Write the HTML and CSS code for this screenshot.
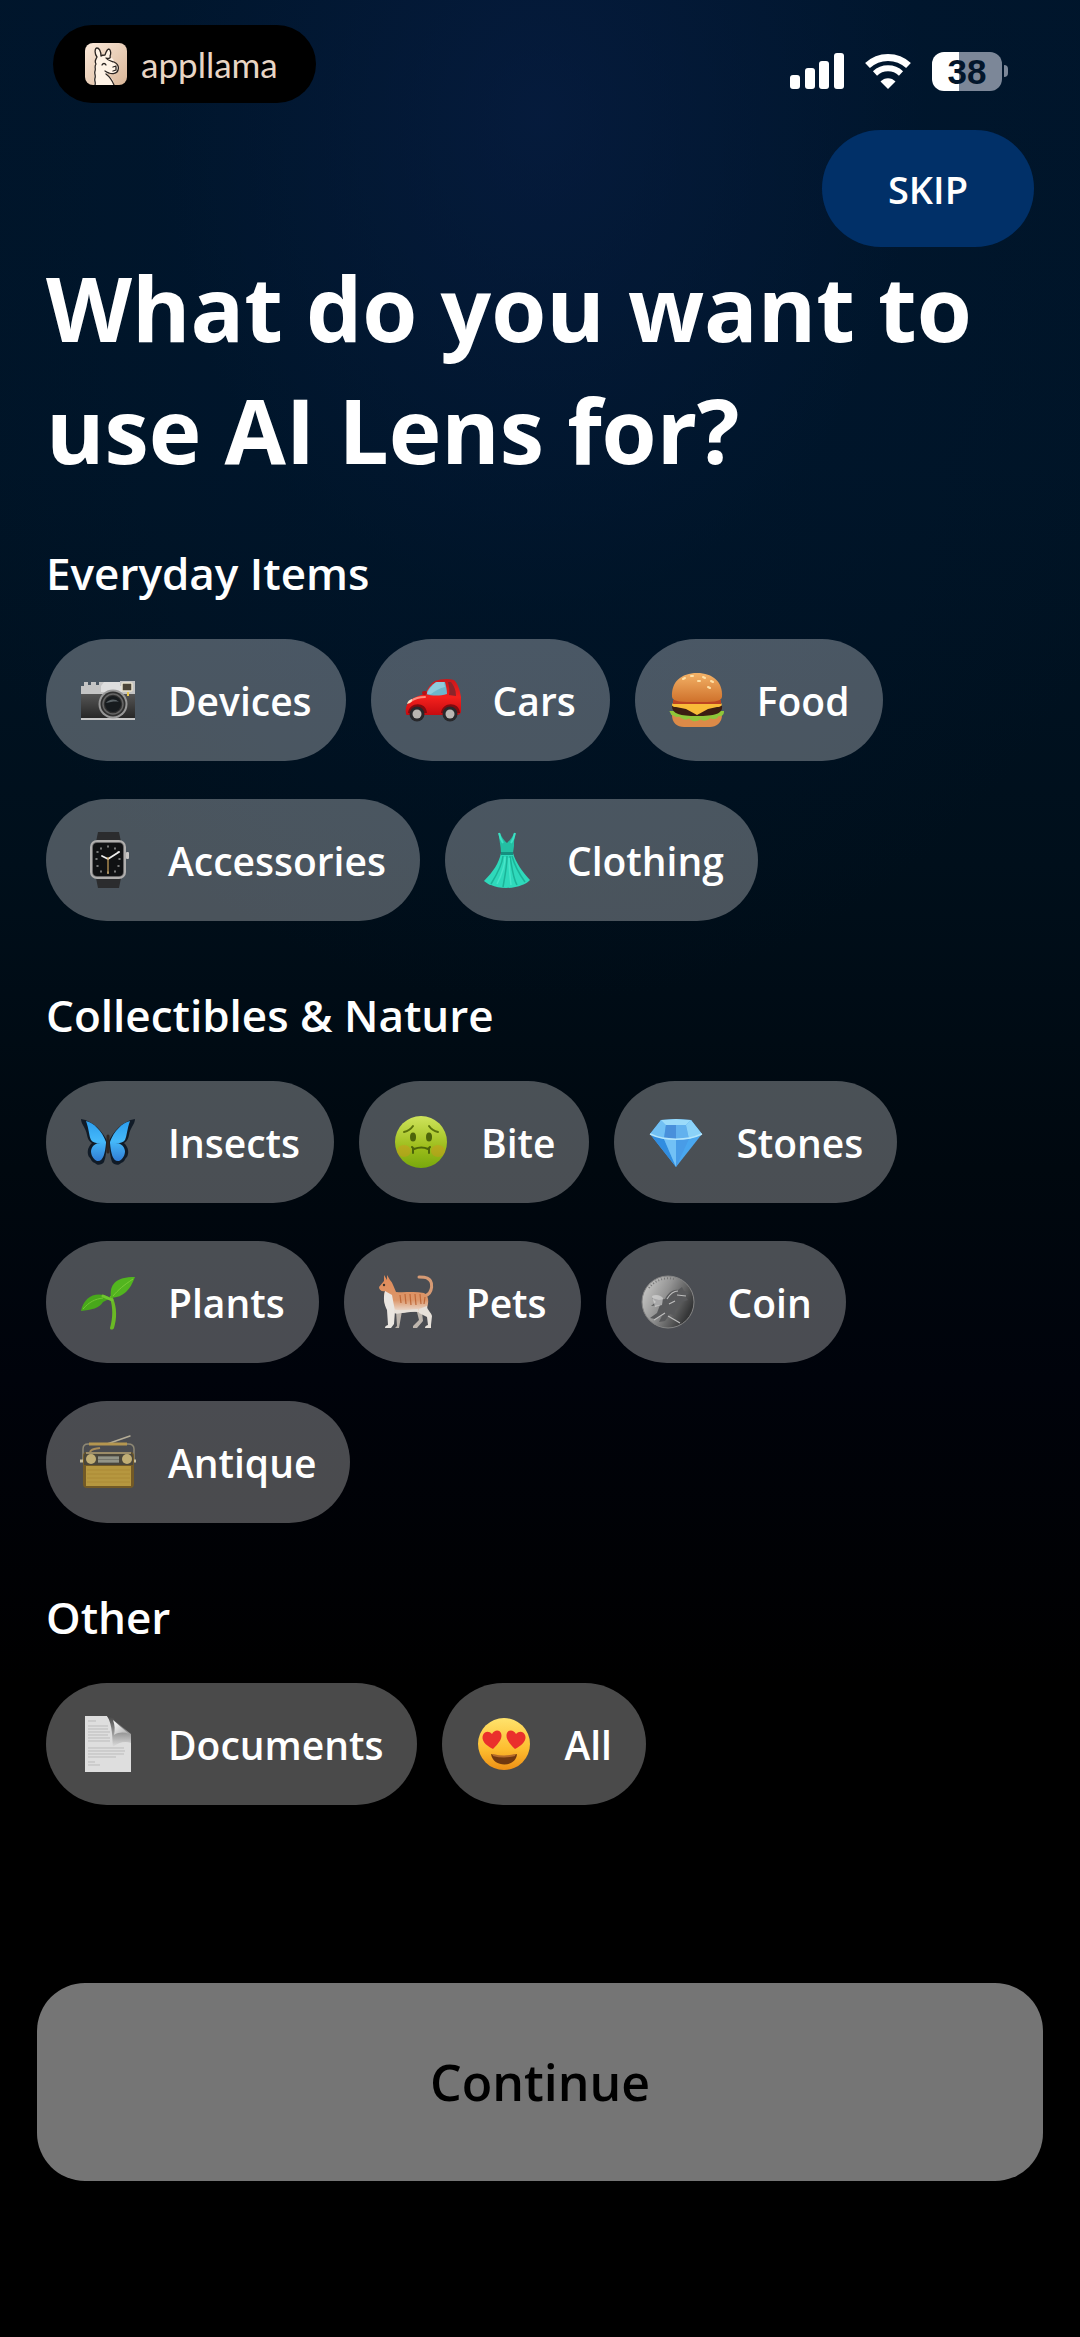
FILE: index.html
```html
<!DOCTYPE html>
<html lang="en">
<head>
    <meta charset="UTF-8">
    <meta name="viewport" content="width=device-width, initial-scale=1.0">
    <title>AI Lens</title>
    <link rel="stylesheet" href="styles.css">
</head>
<body>
    <div class="screen">
        <header class="status-bar">
            <div class="brand">
                <svg class="brand-icon" viewBox="0 0 42 42" aria-hidden="true">
                    <defs>
                        <linearGradient id="brandBg" x1="0" y1="0" x2="1" y2="1">
                            <stop offset="0" stop-color="#fbe9da"/>
                            <stop offset="1" stop-color="#d9b698"/>
                        </linearGradient>
                    </defs>
                    <rect width="42" height="42" rx="8" fill="url(#brandBg)"/>
                    <path d="M9 42c1-3-1-4 0-7s-1-4 0-7 0-4 1-6c-1-4 1-6 2-8-3-4-2-9 0-9s4 3 4 8c1-1 3-1 4-1 1-3 3-6 4-6 2 1 2 5 1 8 3 1 4 3 4 6 3 2 5 4 4 7-1 4-5 4-9 3l-2 1c4 3 7 6 7 11z" fill="#fff3e6"/>
                    <path d="M10 42c1-3-1-4 0-7s-1-4 0-7-1-4 1-7c-2-3 0-5 1-7-3-4-2-9 0-9s4 3 4 8c1-1 3-1 4-1 1-3 3-6 4-6 2 1 2 5 1 7 1 2-1 3-4 2 2 3 6 3 8 4 4 2 5 5 4 8-1 4-6 4-9 3-2 0-2-1-4-2M17 22c1-2 3-2 4 0M28 24l3-1M31 24v3M28 28l3-1M21 31c4 3 6 6 8 11" fill="none" stroke="#2b2522" stroke-width="1.3" stroke-linecap="round" stroke-linejoin="round"/>
                </svg>
                <span class="brand-name">appllama</span>
            </div>
            <div class="status-icons">
                <svg class="signal" viewBox="0 0 54 36" aria-label="Signal">
                    <g fill="#fff">
                        <rect x="0" y="22" width="10" height="14" rx="3"/>
                        <rect x="15" y="15" width="10" height="21" rx="3"/>
                        <rect x="29" y="8" width="10" height="28" rx="3"/>
                        <rect x="44" y="0" width="10" height="36" rx="3"/>
                    </g>
                </svg>
                <svg class="wifi" viewBox="0 0 48 36" aria-label="Wi-Fi">
                    <path d="M3.5 12.5a30 30 0 0 1 41 0" fill="none" stroke="#fff" stroke-width="7"/>
                    <path d="M11 20.5a19 19 0 0 1 26 0" fill="none" stroke="#fff" stroke-width="6"/>
                    <path d="M24 36l-7.5-7.5c4-4.5 11-4.5 15 0z" fill="#fff"/>
                </svg>
                <div class="battery"><span class="battery-level">38</span></div>
            </div>
        </header>

        <div class="top-actions">
            <button type="button" class="skip">SKIP</button>
        </div>

        <main class="content">
            <h1>What do you want to use AI Lens for?</h1>

            <section>
                <h2>Everyday Items</h2>
                <div class="chips">
                    <button type="button" class="chip">
                        <svg class="emoji" viewBox="0 0 56 56" aria-hidden="true">
                            <defs>
                                <linearGradient id="camBody" x1="0" y1="0" x2="0" y2="1">
                                    <stop offset="0" stop-color="#555"/>
                                    <stop offset="1" stop-color="#252525"/>
                                </linearGradient>
                            </defs>
                            <path d="M4 10h4v3h3v-3h5v3h3v-3h5l2 4h29v12H1V14h3z" fill="#c4c4c4"/>
                            <path d="M21 14l3-4h16l2 4v6H21z" fill="#dedede"/>
                            <path d="M40 9h15v5H40z" fill="#c4c4c4"/>
                            <rect x="42" y="11" width="10" height="8" rx="1" fill="#4b4437" stroke="#e6e0cc" stroke-width="1.5"/>
                            <rect x="1" y="22" width="54" height="25" fill="url(#camBody)"/>
                            <rect x="1" y="46" width="54" height="2" fill="#c9c9c9"/>
                            <circle cx="33" cy="32" r="14.500" fill="#989898"/>
                            <circle cx="33" cy="32" r="12.500" fill="#303030"/>
                            <circle cx="33" cy="32" r="10" fill="none" stroke="#666" stroke-width="1.5"/>
                            <circle cx="33" cy="32" r="8" fill="#171b1e"/>
                            <path d="M26 31c3-4 9-5 13-1-4-1-8 0-13 1z" fill="#5b6367"/>
                            <path d="M48 20v4" stroke="#e9c64f" stroke-width="2"/>
                        </svg>
                        Devices
                    </button>
                    <button type="button" class="chip">
                        <svg class="emoji" viewBox="0 0 56 56" aria-hidden="true">
                            <defs>
                                <linearGradient id="carBody" x1="0" y1="0" x2="0" y2="1">
                                    <stop offset="0" stop-color="#c8181b"/>
                                    <stop offset=".5" stop-color="#f5211d"/>
                                    <stop offset="1" stop-color="#c50b10"/>
                                </linearGradient>
                            </defs>
                            <path d="M1 42c-1-5 0-9 3-12 3-4 9-6 16-8 3-6 6-11 10-13 5-2 13-3 19-1 4 4 6 10 7 17v14c0 2-1 3-3 4H4c-2 0-3 0-3-1z" fill="url(#carBody)"/>
                            <path d="M21 22c2-5 5-9 10-12h9c1 4 2 8 2 12-7 2-15 2-21 0z" fill="#6eb7cc"/>
                            <path d="M27 14c1-2 3-3 5-4h7l1 5c-5 1-10 4-14 7h-4c1-3 3-6 5-8z" fill="#b2e0e9" opacity=".5"/>
                            <path d="M43 10h3c3 4 5 8 5 14l-7-1c1-4 0-9-1-13z" fill="#8b252a"/>
                            <path d="M6 29c4-3 8-4 14-4" stroke="#ff8b7b" stroke-width="2" fill="none" stroke-linecap="round"/>
                            <path d="M2 32c1-3 2-4 5-5 0 3-1 4-5 5z" fill="#f7e3c6"/>
                            <path d="M3 41c1-11 18-12 19 0zM36 41c1-11 18-12 19 0z" fill="#7e0c10"/>
                            <circle cx="12" cy="42" r="7.500" fill="#27282b"/>
                            <circle cx="12" cy="42" r="4.500" fill="#b9b6b2"/>
                            <circle cx="45" cy="42" r="7.500" fill="#27282b"/>
                            <circle cx="45" cy="42" r="4.500" fill="#b9b6b2"/>
                            <rect x="17" y="19" width="5" height="4" rx="2" fill="#ba1016"/>
                        </svg>
                        Cars
                    </button>
                    <button type="button" class="chip">
                        <svg class="emoji" viewBox="0 0 56 56" aria-hidden="true">
                            <defs>
                                <linearGradient id="bun" x1="0" y1="0" x2="0" y2="1">
                                    <stop offset="0" stop-color="#f3b267"/>
                                    <stop offset="1" stop-color="#cf712b"/>
                                </linearGradient>
                            </defs>
                            <path d="M3 43h50c0 8-6 12-12 12H15C8 55 3 51 3 43z" fill="#dc8a48"/>
                            <path d="M3 42c3 0 4 4 7 1 4 4 7 5 10 2 4 4 8 4 11 1 4 3 7 2 10-1 4 2 7 1 8-2 3 1 5-1 5-3H2z" fill="#8fc63a" stroke="#8fc63a" stroke-width="2"/>
                            <path d="M3 34c12-4 38-4 50 0 1 8-8 10-25 10S3 42 3 34z" fill="#3c1e12"/>
                            <path d="M4 31h48c2 2 0 4-4 4l-9 2-11 6-11-6-10-2c-4 0-5-2-3-4z" fill="#f9bc38"/>
                            <path d="M4 28h48v4H4z" fill="#bc4522"/>
                            <path d="M3 25C2 10 12 1 28 1s26 9 25 24c-1 5-10 5-25 5S4 30 3 25z" fill="url(#bun)"/>
                            <path d="M14 7l2-1M22 4h2M34 5l2 1M42 9l2 1M29 9h2M39 15l2 1" stroke="#ffe0a5" stroke-width="2" stroke-linecap="round"/>
                        </svg>
                        Food
                    </button>
                    <button type="button" class="chip">
                        <svg class="emoji" viewBox="0 0 56 56" aria-hidden="true">
                            <path d="M16 10l2-10h21l2 10zM16 46l2 10h21l2-10z" fill="#2b2c2e"/>
                            <rect x="10" y="8" width="36" height="39" rx="7" fill="#b0aead"/>
                            <rect x="12" y="10" width="32" height="35" rx="5" fill="#6a696a"/>
                            <rect x="13" y="11" width="30" height="33" rx="4" fill="#101113"/>
                            <rect x="46" y="20" width="3" height="7" rx="1" fill="#c8c6c4"/>
                            <path d="M28 14v1M28 40v1M16 27h1M39 27h1M21 16v1M35 16v1M17 20h1M38 20h1M17 34h1M38 34h1M21 39v1M35 39v1" stroke="#999" stroke-width="1.5" stroke-linecap="round"/>
                            <path d="M28 27l-6-3M28 27l11-7" stroke="#eee" stroke-width="1.800" stroke-linecap="round"/>
                            <path d="M28 25v17" stroke="#cda45c" stroke-width="1.200"/>
                        </svg>
                        Accessories
                    </button>
                    <button type="button" class="chip">
                        <svg class="emoji" viewBox="0 0 56 56" aria-hidden="true">
                            <path d="M21 1c2 5 4 7 7 10 3-3 5-5 7-10l1 1c-1 5-1 9-1 12l-1 7H22c0-7-2-12-2-19z" fill="#24bfa3"/>
                            <path d="M22 21h12c3 10 9 18 17 27-3 3-5 4-8 5-9 4-23 4-31 0-2 0-4-2-7-4 9-9 15-18 17-28z" fill="#2fd9bb"/>
                            <path d="M24 24c-1 10-7 20-12 28M28 24c0 10-2 20-4 31M31 24c2 12 3 22 7 29M33 24c3 11 8 19 13 26" stroke="#1cb398" stroke-width="1.5" fill="none"/>
                            <path d="M26 25c0 10-4 19-8 27M30 26c0 10 1 18 2 27" stroke="#48e5c9" stroke-width="1.5" fill="none"/>
                            <path d="M22 20h12v3H22z" fill="#158f80"/>
                            <path d="M20 1c1 5 2 7 4 10M36 1c-1 5-2 7-4 10" stroke="#3ce0c3" stroke-width="2" fill="none"/>
                        </svg>
                        Clothing
                    </button>
                </div>
            </section>

            <section>
                <h2>Collectibles &amp; Nature</h2>
                <div class="chips">
                    <button type="button" class="chip">
                        <svg class="emoji" viewBox="0 0 56 56" aria-hidden="true">
                            <defs>
                                <linearGradient id="wing" x1="0" y1="0" x2="0" y2="1">
                                    <stop offset="0" stop-color="#2c9eee"/>
                                    <stop offset=".5" stop-color="#45b9fa"/>
                                    <stop offset="1" stop-color="#317dd5"/>
                                </linearGradient>
                            </defs>
                            <path d="M28 29C23 17 13 7 1 5c0 5 5 9 6 16 1 5 3 7 5 8-5 5-5 10-3 14 2 1 2 5 6 6 2 3 7 2 9-1 2-5 2-12 4-19z" fill="#111b27"/>
                            <path d="M28 29C33 17 43 7 55 5c0 5-5 9-6 16-1 5-3 7-5 8 5 5 5 10 3 14-2 1-2 5-6 6-2 3-7 2-9-1-2-5-2-12-4-19z" fill="#111b27"/>
                            <path d="M26 28C22 17 14 9 6 7c3 8 3 15 5 19 2 3 7 4 15 3zM26 29c-8-1-14 1-15 8 0 4 2 8 6 10 6 1 8-7 9-18z" fill="url(#wing)"/>
                            <path d="M30 28c4-11 12-19 20-21-3 8-3 15-5 19-2 3-7 4-15 3zM30 29c8-1 14 1 15 8 0 4-2 8-6 10-6 1-8-7-9-18z" fill="url(#wing)"/>
                            <path d="M28 22v16" stroke="#302621" stroke-width="3" stroke-linecap="round"/>
                        </svg>
                        Insects
                    </button>
                    <button type="button" class="chip">
                        <svg class="emoji" viewBox="0 0 56 56" aria-hidden="true">
                            <defs>
                                <linearGradient id="sick" x1="0" y1="0" x2="0" y2="1">
                                    <stop offset="0" stop-color="#cfe45c"/>
                                    <stop offset=".6" stop-color="#9dbd1b"/>
                                    <stop offset="1" stop-color="#78a80d"/>
                                </linearGradient>
                            </defs>
                            <circle cx="28" cy="28" r="26" fill="url(#sick)"/>
                            <ellipse cx="11" cy="37" rx="7" ry="6" fill="#d99220" opacity=".4"/>
                            <ellipse cx="45" cy="37" rx="7" ry="6" fill="#d99220" opacity=".4"/>
                            <ellipse cx="20" cy="23" rx="3" ry="4.500" fill="#4d640a"/>
                            <ellipse cx="36" cy="23" rx="3" ry="4.500" fill="#4d640a"/>
                            <path d="M11 18c4-1 7-3 9-6M45 18c-4-1-7-3-9-6" stroke="#5b730b" stroke-width="2" fill="none" stroke-linecap="round"/>
                            <path d="M19 33l2 2c5-2 10-2 14 0l2-2M20 34v5M36 34v5" stroke="#4d640a" stroke-width="2" fill="none" stroke-linecap="round"/>
                        </svg>
                        Bite
                    </button>
                    <button type="button" class="chip">
                        <svg class="emoji" viewBox="0 0 56 56" aria-hidden="true">
                            <path d="M13 6l15-1 15 1 11 14-26 33L2 20z" fill="#4aa7ef"/>
                            <path d="M13 6L2 20l14 4 2-14z" fill="#71c0f4"/>
                            <path d="M13 6l15-1 15 1-5 5H18z" fill="#9bdbfa"/>
                            <path d="M18 11h20l3 14H16z" fill="#4990db"/>
                            <path d="M28 11h10l3 14H28z" fill="#62b1ee"/>
                            <path d="M43 6l11 14-13 5-3-14z" fill="#8bd2f8"/>
                            <path d="M2 20l14 5 12 28z" fill="#318de0"/>
                            <path d="M16 25h12v28z" fill="#72c1f6"/>
                            <path d="M28 25h13L28 53z" fill="#489ce7"/>
                            <path d="M2 20c15 7 37 7 52 0" stroke="#b5e6fb" stroke-width="1.5" fill="none"/>
                        </svg>
                        Stones
                    </button>
                    <button type="button" class="chip">
                        <svg class="emoji" viewBox="0 0 56 56" aria-hidden="true">
                            <path d="M30 54c3-11 3-20 0-30-1-3 2-3 3 0 4 10 4 20 1 30-1 2-4 2-4 0z" fill="#6aba25"/>
                            <path d="M31 24c-2-14 5-21 24-21-5 13-11 20-24 21z" fill="#52b51f"/>
                            <path d="M33 22c5-6 11-11 20-17" stroke="#7acb38" stroke-width="1" fill="none"/>
                            <path d="M31 24C17 16 4 22 1 37c10-1 19-3 22-9z" fill="#48a81b"/>
                            <path d="M3 35c6-7 12-10 20-11" stroke="#72c534" stroke-width="1" fill="none"/>
                            <path d="M23 22l9 4" stroke="#70c52f" stroke-width="3" stroke-linecap="round"/>
                        </svg>
                        Plants
                    </button>
                    <button type="button" class="chip">
                        <svg class="emoji" viewBox="0 0 56 56" aria-hidden="true">
                            <defs>
                                <linearGradient id="fur" x1="0" y1="0" x2="0" y2="1">
                                    <stop offset="0" stop-color="#e08a58"/>
                                    <stop offset=".65" stop-color="#dc9669"/>
                                    <stop offset="1" stop-color="#eeeae5"/>
                                </linearGradient>
                            </defs>
                            <path d="M47 22c8-3 9-15 2-18-2-1-6-1-8-1" fill="none" stroke="#d69a74" stroke-width="3" stroke-linecap="round"/>
                            <path d="M39 38l2 8-6 6v2h4l6-7-1-9zM18 37l1 15-2 2h4l3-17z" fill="#bdb5ad"/>
                            <path d="M9 1l3 5c3 3 4 8 6 12 8 1 18-1 28 1 5 3 5 9 3 15-2 4-5 5-9 4-7-1-11 0-17 1-5 1-9 0-12-3-5-5-6-12-4-19-3 1-6-1-6-4l5-6V1l3 5z" fill="url(#fur)"/>
                            <path d="M7 17l7 4 3 16-1 13-3 4H7c0-2 1-2 3-3l-1-15c-3-6-4-12-2-19z" fill="#eae6e1"/>
                            <path d="M41 35l8-3c0 4 4 6 5 10l-1 9v3h-6c0-2 1-2 3-3l-1-8-8-4z" fill="#e7e1da"/>
                            <path d="M16 35c7 3 15 0 24 0v3c-8-1-15 2-24 1z" fill="#e7e1da"/>
                            <path d="M22 21l1 8M27 20l1 10M32 20l1 11M37 20l1 11M42 20l1 10M47 23l-1 7" stroke="#bf6839" stroke-width="1.200"/>
                            <circle cx="6" cy="11" r="1.200" fill="#3c332c"/>
                        </svg>
                        Pets
                    </button>
                    <button type="button" class="chip">
                        <svg class="emoji" viewBox="0 0 56 56" aria-hidden="true">
                            <defs>
                                <linearGradient id="coin" x1="0" y1="0" x2="1" y2=".5">
                                    <stop offset="0" stop-color="#d5d5d3"/>
                                    <stop offset=".5" stop-color="#939393"/>
                                    <stop offset="1" stop-color="#353637"/>
                                </linearGradient>
                            </defs>
                            <circle cx="28" cy="28" r="26" fill="url(#coin)" stroke="#858585" stroke-width="1"/>
                            <path d="M9 14A24 24 0 0 1 34 5" fill="none" stroke="#777" stroke-width="2" stroke-dasharray="1 2"/>
                            <path d="M25 25c3-6 8-10 13-9l4-3 2 4 5 2-4 3 3 4-6 2-3 5-4 4 1 5-6-2-5 7-6 1 3-6-7 3-5-1 7-5 3-8-9 1 5-4-4-4 7 2z" fill="#58595b"/>
                            <path d="M12 22c4-2 8-1 11 2l-1 7-7 2z" fill="#ddd" opacity=".6"/>
                            <path d="M27 25c3-5 6-8 11-8M28 42l12 7M14 46l11-7M37 21l9 1M29 30l6-3" stroke="#bdbdbd" stroke-width="1.200" fill="none"/>
                        </svg>
                        Coin
                    </button>
                    <button type="button" class="chip">
                        <svg class="emoji" viewBox="0 0 56 56" aria-hidden="true">
                            <path d="M27 10L50 2" stroke="#b5ad97" stroke-width="1.5" stroke-linecap="round"/>
                            <path d="M3 26V15c0-4 2-5 5-5h40c4 0 6 2 6 5v11" fill="none" stroke="#8e8874" stroke-width="1.5"/>
                            <path d="M9 10h38" stroke="#b49650" stroke-width="3"/>
                            <path d="M10 18c2-4 6-3 10-4" stroke="#a88c59" stroke-width="2" fill="none"/>
                            <rect x="3" y="18" width="51" height="36" rx="4" fill="#735a26"/>
                            <path d="M4 22c0-3 2-4 5-4h39c3 0 5 2 5 4v9H4z" fill="#4a463b"/>
                            <path d="M6 19h45" stroke="#b7a579" stroke-width="1.5"/>
                            <path d="M18 22h21v7H18z" fill="#77786f"/>
                            <path d="M18 24h21M18 27h21" stroke="#b0b0a0" stroke-width="1"/>
                            <circle cx="11" cy="25" r="5" fill="#c1ae75"/>
                            <circle cx="47" cy="25" r="5" fill="#c1ae75"/>
                            <rect x="6" y="32" width="45" height="20" fill="#b6973f"/>
                            <path d="M7 36h43M7 40h43M7 44h43M7 48h43" stroke="#ab8a37" stroke-width="1"/>
                            <path d="M0 27h3M54 27h2" stroke="#c6bd9c" stroke-width="3"/>
                        </svg>
                        Antique
                    </button>
                </div>
            </section>

            <section>
                <h2>Other</h2>
                <div class="chips">
                    <button type="button" class="chip">
                        <svg class="emoji" viewBox="0 0 56 56" aria-hidden="true">
                            <defs>
                                <linearGradient id="fold" x1="0" y1="0" x2="1" y2="1">
                                    <stop offset="0" stop-color="#fff"/>
                                    <stop offset="1" stop-color="#aaa"/>
                                </linearGradient>
                                <linearGradient id="shade" x1="0" y1="0" x2="0" y2="1">
                                    <stop offset="0" stop-color="#444"/>
                                    <stop offset="1" stop-color="#dedede"/>
                                </linearGradient>
                            </defs>
                            <path d="M5 0h22l24 19v37H5z" fill="#dedede"/>
                            <path d="M8 5h8M8 10h20M8 13h20M8 16h22M8 19h20M8 22h22M8 25h22M8 32h36M8 35h37M8 38h36M8 41h28M8 46h7M8 49h12" stroke="#bbb" stroke-width="1"/>
                            <path d="M27 0c4 0 7 2 8 5l16 13v9c-6-2-12-1-18 4-1-8 0-22-6-31z" fill="url(#shade)"/>
                            <path d="M33 4l16 14c-5-2-10-2-15 1 1-5 1-10-1-15z" fill="url(#fold)"/>
                        </svg>
                        Documents
                    </button>
                    <button type="button" class="chip">
                        <svg class="emoji" viewBox="0 0 56 56" aria-hidden="true">
                            <defs>
                                <linearGradient id="face" x1="0" y1="0" x2="0" y2="1">
                                    <stop offset="0" stop-color="#ffe36c"/>
                                    <stop offset=".6" stop-color="#fdbd2f"/>
                                    <stop offset="1" stop-color="#ee8f15"/>
                                </linearGradient>
                            </defs>
                            <circle cx="28" cy="28" r="26" fill="url(#face)"/>
                            <path d="M17 33C9 29 5 24 7 19c2-4 6-4 9-1 2-4 7-5 9-1 2 5-2 10-8 16z" fill="#ea302c"/>
                            <path d="M39 33c8-4 12-9 10-14-2-4-6-4-9-1-2-4-7-5-9-1-2 5 2 10 8 16z" fill="#ea302c"/>
                            <path d="M15 38c8 3 18 3 26 0-1 14-24 14-26 0z" fill="#71380f"/>
                            <path d="M17 39c7 2 15 2 22 0" stroke="#b66c2a" stroke-width="2" fill="none"/>
                        </svg>
                        All
                    </button>
                </div>
            </section>
        </main>

        <footer class="bottom">
            <button type="button" class="continue">Continue</button>
        </footer>
    </div>
</body>
</html>
```
FILE: styles.css
```css
* {
    box-sizing: border-box;
}

body {
    margin: 0;
    background: #000;
    color: #fff;
    font-family: "Open Sans", sans-serif;
}

button {
    border: none;
    font-family: inherit;
    cursor: pointer;
}

.screen {
    min-height: 100vh;
    display: flex;
    flex-direction: column;
    background:
        radial-gradient(ellipse 65% 38% at 50% 5%, rgba(8, 30, 70, 0.65), rgba(0, 24, 52, 0.3) 55%, transparent),
        linear-gradient(#00152a, #001426 20%, #000f1b 37%, #00080f 50%, #00030b 59%, #000 72%);
}

.status-bar {
    display: flex;
    justify-content: space-between;
    align-items: center;
    padding: 25px 72px 0 53px;
}

.brand {
    display: flex;
    align-items: center;
    gap: 14px;
    height: 78px;
    padding: 0 38px 0 32px;
    border-radius: 39px;
    background: #000;
}

.brand-icon {
    width: 42px;
    height: 42px;
}

.brand-name {
    font-family: Lato, sans-serif;
    font-size: 35px;
    line-height: 40px;
    color: #e8d5c5;
}

.status-icons {
    display: flex;
    align-items: center;
    gap: 20px;
    padding-top: 14px;
}

.signal {
    width: 54px;
    height: 36px;
}

.wifi {
    width: 48px;
    height: 36px;
}

.battery {
    display: flex;
    align-items: center;
}

.battery-level {
    width: 70px;
    height: 39px;
    border-radius: 12px;
    background: linear-gradient(90deg, #fff 38%, #7c8798 38%);
    color: #03162b;
    font-family: "Liberation Sans", sans-serif;
    font-size: 35px;
    font-weight: bold;
    line-height: 39px;
    text-align: center;
}

.battery::after {
    content: "";
    width: 4px;
    height: 12px;
    margin-left: 2px;
    border-radius: 0 6px 6px 0;
    background: #7c8798;
}

.top-actions {
    display: flex;
    justify-content: flex-end;
    padding: 27px 46px 0;
}

.skip {
    height: 117px;
    padding: 0 66px;
    border-radius: 59px;
    background: #013068;
    color: #fff;
    font-size: 38px;
    font-weight: 600;
}

.content {
    padding: 0 46px;
}

h1 {
    margin: 0 0 52px;
    font-size: 89px;
    font-weight: 700;
    line-height: 122px;
}

h2 {
    margin: 0 0 36px;
    font-size: 44px;
    font-weight: 600;
    line-height: 60px;
}

section + section {
    margin-top: 64px;
}

.chips {
    display: flex;
    flex-wrap: wrap;
    gap: 38px 25px;
}

.chip {
    display: flex;
    align-items: center;
    gap: 32px;
    height: 122px;
    padding: 0 34px;
    border-radius: 61px;
    background: rgba(255, 255, 255, 0.29);
    color: #fff;
    font-size: 39px;
    font-weight: 600;
}

.emoji {
    width: 56px;
    height: 56px;
}

.bottom {
    margin-top: auto;
    padding: 60px 37px 156px;
}

.continue {
    width: 100%;
    height: 198px;
    border-radius: 48px;
    background: #757575;
    color: #000;
    font-size: 50px;
    font-weight: 600;
}
```
